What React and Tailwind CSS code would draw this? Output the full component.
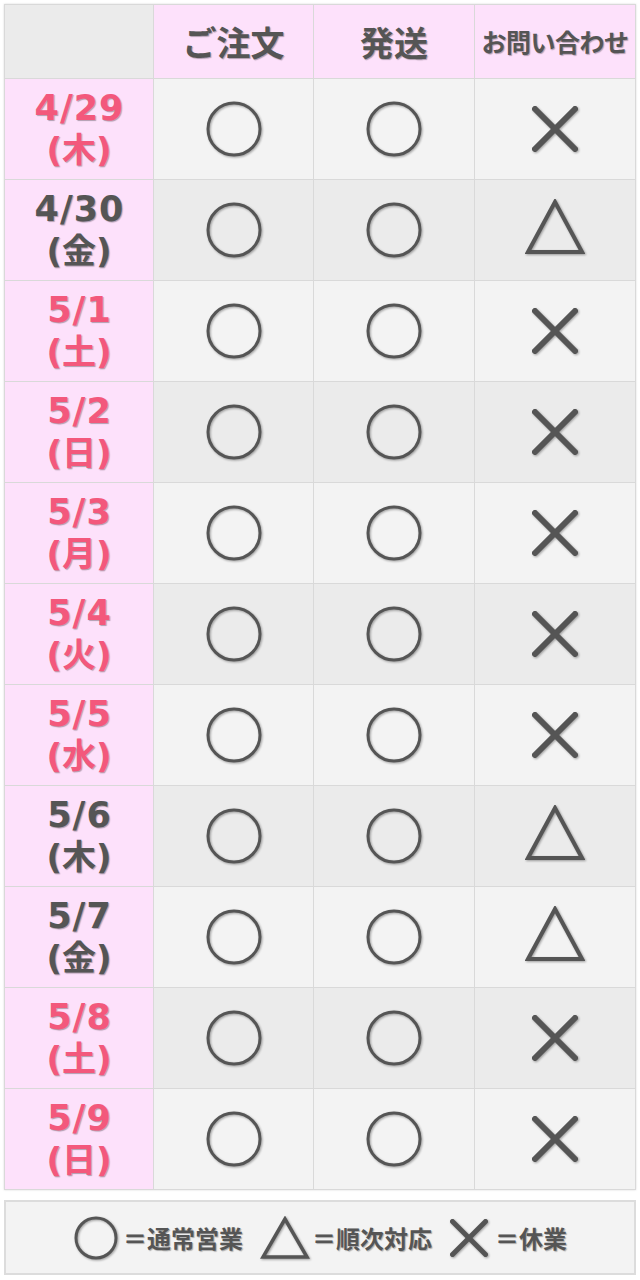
import React from "react";

const rows = [
  { d: "4/29", w: "木", red: true, c: "x" },
  { d: "4/30", w: "金", red: false, c: "t" },
  { d: "5/1", w: "土", red: true, c: "x" },
  { d: "5/2", w: "日", red: true, c: "x" },
  { d: "5/3", w: "月", red: true, c: "x" },
  { d: "5/4", w: "火", red: true, c: "x" },
  { d: "5/5", w: "水", red: true, c: "x" },
  { d: "5/6", w: "木", red: false, c: "t" },
  { d: "5/7", w: "金", red: false, c: "t" },
  { d: "5/8", w: "土", red: true, c: "x" },
  { d: "5/9", w: "日", red: true, c: "x" },
];

const shadow = "drop-shadow-[1px_1px_1px_rgba(0,0,0,0.35)]";

function Circle({ size = 60, r = 26, sw = 3 }) {
  return (
    <svg width={size} height={size} viewBox={`0 0 ${size} ${size}`} className={shadow}>
      <circle cx={size / 2} cy={size / 2} r={r} fill="none" stroke="#555" strokeWidth={sw} />
    </svg>
  );
}

function Triangle({ w = 60, h = 56, sw = 4 }) {
  return (
    <svg width={w} height={h} viewBox={`0 0 ${w} ${h}`} className={shadow}>
      <polygon points={`${w / 2},3 3,${h - 3} ${w - 3},${h - 3}`} fill="none" stroke="#555" strokeWidth={sw} />
    </svg>
  );
}

function Cross({ size = 48, sw = 6 }) {
  const p = sw / 2 + 1;
  return (
    <svg width={size} height={size} viewBox={`0 0 ${size} ${size}`} className={shadow}>
      <g stroke="#555" strokeWidth={sw} strokeLinecap="round">
        <line x1={p} y1={p} x2={size - p} y2={size - p} />
        <line x1={size - p} y1={p} x2={p} y2={size - p} />
      </g>
    </svg>
  );
}

const txtShadow = "[text-shadow:1px_1px_1px_rgba(0,0,0,0.3)]";

export default function App() {
  return (
    <div
      className="w-[640px] bg-white pt-1 pb-2 px-1"
      style={{ fontFamily: '"Noto Sans CJK JP", "Noto Sans", sans-serif' }}
    >
      <div className="grid grid-cols-[148px_159px_160px_160px] gap-px bg-[#d9d9d9] border border-[#d9d9d9] shadow-[0_0_2px_rgba(0,0,0,0.15)]">
        <div className="h-[73px] bg-[#ebebeb]" />
        <div className={`h-[73px] bg-[#fde1fb] flex items-center justify-center text-[34px] font-bold text-[#555] ${txtShadow}`}>
          ご注文
        </div>
        <div className={`h-[73px] bg-[#fde1fb] flex items-center justify-center text-[34px] font-bold text-[#555] ${txtShadow}`}>
          発送
        </div>
        <div className={`h-[73px] bg-[#fde1fb] flex items-center justify-center text-[25px] font-bold text-[#555] tracking-[-0.5px] ${txtShadow}`}>
          お問い合わせ
        </div>

        {rows.map((r, i) => {
          const bg = i % 2 === 0 ? "bg-[#f3f3f3]" : "bg-[#ebebeb]";
          return (
            <React.Fragment key={i}>
              <div
                className={`h-[100px] bg-[#fde1fb] flex flex-col items-center justify-center font-bold leading-[42px] font-['DejaVu_Sans','Noto_Sans_CJK_JP',sans-serif] ${txtShadow} ${
                  r.red ? "text-[#f3587c]" : "text-[#555]"
                }`}
              >
                <span className="text-[35px] tracking-[1px] mr-[-1px]">{r.d}</span>
                <span className="text-[34px]">({r.w})</span>
              </div>
              <div className={`h-[100px] ${bg} flex items-center justify-center`}>
                <Circle />
              </div>
              <div className={`h-[100px] ${bg} flex items-center justify-center`}>
                <Circle />
              </div>
              <div className={`h-[100px] ${bg} flex items-center justify-center`}>
                {r.c === "x" ? <Cross /> : <div className="mb-[6px]"><Triangle /></div>}
              </div>
            </React.Fragment>
          );
        })}
      </div>

      <div className="mt-[10px] h-[75px] border-2 border-[#dcdcdc] bg-[#f3f3f3] flex items-center justify-center gap-[17px] text-[24px] font-bold text-[#555]">
        <div className="flex items-center gap-[4px]">
          <Circle size={46} r={20} sw={3} />
          <span className={txtShadow}>＝通常営業</span>
        </div>
        <div className="flex items-center gap-[2px]">
          <Triangle w={50} h={44} sw={3.5} />
          <span className={txtShadow}>＝順次対応</span>
        </div>
        <div className="flex items-center gap-[6px]">
          <Cross size={40} sw={5} />
          <span className={txtShadow}>＝休業</span>
        </div>
      </div>
    </div>
  );
}
